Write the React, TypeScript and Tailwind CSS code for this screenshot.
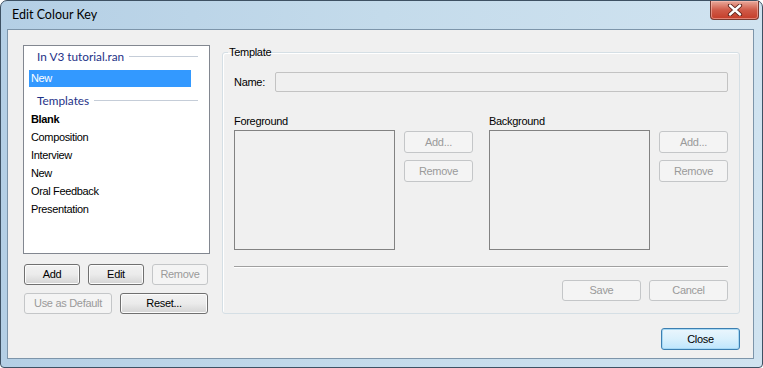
const ui = { fontFamily: '"Liberation Sans", Arial, sans-serif' };
const seg = { fontFamily: 'Lato, "Noto Sans", sans-serif' };

function Btn({
  label,
  w,
  h = 21,
  disabled = false,
  primary = false,
}: {
  label: string;
  w: number;
  h?: number;
  disabled?: boolean;
  primary?: boolean;
}) {
  const base =
    'flex items-center justify-center rounded-[3px] border text-[11px] tracking-[-0.3px] shrink-0';
  const look = disabled
    ? 'border-[#c4c6c8] bg-[#f4f4f4] text-[#9a9a9a]'
    : primary
    ? 'border-[#3c7fb1] bg-gradient-to-b from-[#eaf6fd] via-[#d9f0fc] to-[#bee6fd] text-black shadow-[inset_0_0_0_1px_#a6d8f4]'
    : 'border-[#707070] bg-gradient-to-b from-[#f2f2f2] via-[#ebebeb] to-[#d4d4d4] text-black shadow-[inset_0_0_0_1px_#fcfcfc]';
  return (
    <div className={`${base} ${look}`} style={{ ...ui, width: w, height: h }}>
      {label}
    </div>
  );
}

function GroupHeader({ text }: { text: string }) {
  return (
    <div className="flex items-center pl-[13px] pr-[11px] text-[11.8px] text-[#1e3287]" style={seg}>
      <span className="leading-none">{text}</span>
      <span className="ml-[5px] h-px flex-1 bg-[#c5cdd8]" />
    </div>
  );
}

function Item({ text, bold = false }: { text: string; bold?: boolean }) {
  return (
    <div
      className={`h-[18px] flex items-center pl-[7px] text-[11px] tracking-[-0.35px] text-black ${bold ? 'font-bold' : ''}`}
      style={ui}
    >
      {text}
    </div>
  );
}

function ColourList({ title }: { title: string }) {
  return (
    <div className="flex flex-col w-[239px]">
      <div className="h-[13px] text-[11px] leading-[13px] tracking-[-0.3px] text-black" style={ui}>
        {title}
      </div>
      <div className="flex mt-[2px]">
        <div className="w-[161px] h-[120px] border border-[#828282] bg-[#f0f0f0]" />
        <div className="ml-[9px] mt-[1px] flex flex-col gap-[7px]">
          <Btn label="Add..." w={69} h={22} disabled />
          <Btn label="Remove" w={69} h={22} disabled />
        </div>
      </div>
    </div>
  );
}

export default function App() {
  return (
    <div className="w-[763px] h-[368px] bg-white">
      <div className="w-[763px] h-[368px] flex flex-col rounded-t-[7px] rounded-b-[4px] border border-[#3e5163] bg-gradient-to-r from-[#b4cfe5] via-[#c4dbeb] to-[#d0e3f0]">
        {/* title bar */}
        <div className="h-[28px] flex items-start justify-between">
          <div className="pl-[11px] pt-[6px] text-[12.5px] leading-[16px] text-black" style={seg}>
            Edit Colour Key
          </div>
          <div className="mr-[3px] w-[49px] h-[19px] rounded-b-[4px] border border-t-0 border-[#7a3a30] bg-gradient-to-b from-[#e8a99b] via-[#cf5a48] to-[#c43c28] shadow-[inset_0_0_0_1px_rgba(255,200,190,0.5)] flex items-center justify-center">
            <svg width="16" height="12" viewBox="0 0 16 12">
              <path d="M3 1.5 L13 10.5 M13 1.5 L3 10.5" stroke="#5a2018" strokeWidth="4.2" strokeLinecap="round" />
              <path d="M3 1.5 L13 10.5 M13 1.5 L3 10.5" stroke="#ffffff" strokeWidth="2.4" strokeLinecap="round" />
            </svg>
          </div>
        </div>

        {/* client area */}
        <div className="ml-[6px] mr-[8px] h-[330px] border border-[#7d95aa] bg-[#f0f0f0] flex flex-col">
          <div className="flex pl-[15px] pt-[15px]">
            {/* left column */}
            <div className="flex flex-col w-[187px]">
              <div className="w-[187px] h-[209px] border border-[#828790] bg-white pt-[5px]">
                <GroupHeader text="In V3 tutorial.ran" />
                <div
                  className="mt-[7px] ml-[5px] w-[162px] h-[17px] bg-[#3399ff] text-white text-[11px] tracking-[-0.35px] flex items-center pl-[2px]"
                  style={ui}
                >
                  New
                </div>
                <div className="mt-[8px]">
                  <GroupHeader text="Templates" />
                </div>
                <div className="mt-[4px]">
                  <Item text="Blank" bold />
                  <Item text="Composition" />
                  <Item text="Interview" />
                  <Item text="New" />
                  <Item text="Oral Feedback" />
                  <Item text="Presentation" />
                </div>
              </div>
              <div className="mt-[10px] pl-[1px] flex gap-[8px]">
                <Btn label="Add" w={56} />
                <Btn label="Edit" w={56} />
                <Btn label="Remove" w={56} disabled />
              </div>
              <div className="mt-[8px] pl-[1px] flex gap-[8px]">
                <Btn label="Use as Default" w={88} disabled />
                <Btn label="Reset..." w={88} />
              </div>
            </div>

            {/* template group */}
            <fieldset className="ml-[12px] w-[518px] h-[269px] border border-[#d5dfe5] rounded-[3px] px-[11px] shadow-[inset_1px_1px_0_#fff]">
              <legend className="ml-[-6px] px-[1px] text-[11px] leading-[14px] tracking-[-0.3px] text-black" style={ui}>
                Template
              </legend>
              <div className="mt-[13px] flex items-center">
                <div className="w-[41px] text-[11px] tracking-[-0.3px] text-black" style={ui}>
                  Name:
                </div>
                <div className="w-[453px] h-[20px] rounded-[2px] border border-[#c3c3c3] bg-[#f0f0f0]" />
              </div>
              <div className="mt-[23px] flex gap-[16px]">
                <ColourList title="Foreground" />
                <ColourList title="Background" />
              </div>
              <div className="mt-[16px] h-[2px] border-t border-[#a0a0a0] border-b border-b-white" />
              <div className="mt-[12px] flex justify-end gap-[8px]">
                <Btn label="Save" w={79} disabled />
                <Btn label="Cancel" w={79} disabled />
              </div>
            </fieldset>
          </div>

          <div className="mt-auto mb-[8px] mr-[13px] flex justify-end">
            <Btn label="Close" w={79} h={22} primary />
          </div>
        </div>
      </div>
    </div>
  );
}
